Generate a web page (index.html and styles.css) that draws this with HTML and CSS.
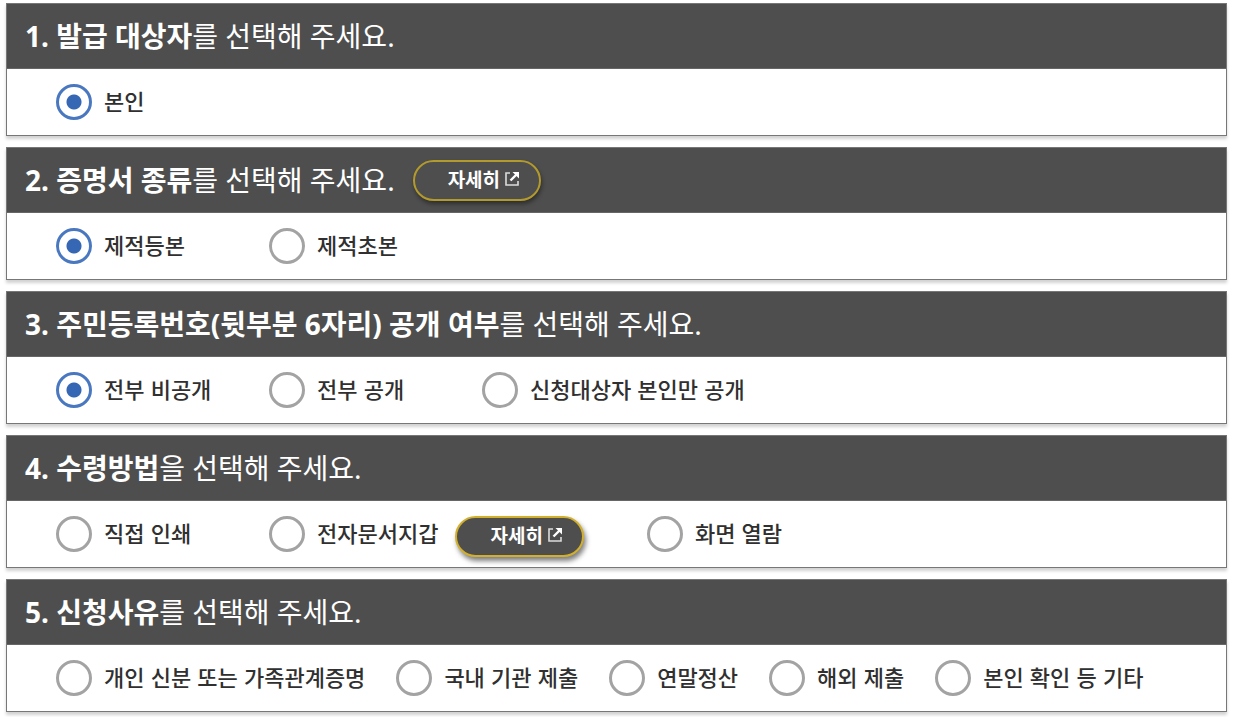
FILE: index.html
```html
<!DOCTYPE html>
<html lang="ko">
<head>
<meta charset="utf-8">
<title>제적부 증명서 신청</title>
<meta name="viewport" content="width=device-width, initial-scale=1">
<link rel="stylesheet" href="styles.css">
</head>
<body>
<svg class="sprite" aria-hidden="true">
  <symbol id="icon-external" viewBox="0 0 16 16">
    <path d="M6 2H2v12h12v-4" fill="none" stroke="currentColor" stroke-width="1.6" opacity=".8"/>
    <path d="M6.500 9.500 13 3" fill="none" stroke="currentColor" stroke-width="2.4"/>
    <path d="M8.500 1H15v6.500z" fill="currentColor"/>
  </symbol>
</svg>
<form class="form">
  <section class="card" role="radiogroup" aria-labelledby="q1">
    <header class="card-head"><h2 class="title" id="q1"><strong>1. 발급 대상자</strong>를 선택해 주세요.</h2></header>
    <div class="options">
      <label class="option"><input class="radio" type="radio" name="target" checked><span class="option-text">본인</span></label>
    </div>
  </section>

  <section class="card" role="radiogroup" aria-labelledby="q2">
    <header class="card-head">
      <h2 class="title" id="q2"><strong>2. 증명서 종류</strong>를 선택해 주세요.</h2>
      <button class="detail" type="button">자세히<svg class="icon" aria-hidden="true"><use href="#icon-external"/></svg></button>
    </header>
    <div class="options">
      <label class="option option-column"><input class="radio" type="radio" name="kind" checked><span class="option-text">제적등본</span></label>
      <label class="option option-column"><input class="radio" type="radio" name="kind"><span class="option-text">제적초본</span></label>
    </div>
  </section>

  <section class="card" role="radiogroup" aria-labelledby="q3">
    <header class="card-head"><h2 class="title" id="q3"><strong>3. 주민등록번호(뒷부분 6자리) 공개 여부</strong>를 선택해 주세요.</h2></header>
    <div class="options">
      <label class="option option-column"><input class="radio" type="radio" name="number" checked><span class="option-text">전부 비공개</span></label>
      <label class="option option-column"><input class="radio" type="radio" name="number"><span class="option-text">전부 공개</span></label>
      <label class="option"><input class="radio" type="radio" name="number"><span class="option-text">신청대상자 본인만 공개</span></label>
    </div>
  </section>

  <section class="card" role="radiogroup" aria-labelledby="q4">
    <header class="card-head"><h2 class="title" id="q4"><strong>4. 수령방법</strong>을 선택해 주세요.</h2></header>
    <div class="options">
      <label class="option option-column"><input class="radio" type="radio" name="receive"><span class="option-text">직접 인쇄</span></label>
      <div class="option-group">
        <label class="option"><input class="radio" type="radio" name="receive"><span class="option-text">전자문서지갑</span></label>
        <button class="detail detail-raised" type="button">자세히<svg class="icon" aria-hidden="true"><use href="#icon-external"/></svg></button>
      </div>
      <label class="option"><input class="radio" type="radio" name="receive"><span class="option-text">화면 열람</span></label>
    </div>
  </section>

  <section class="card" role="radiogroup" aria-labelledby="q5">
    <header class="card-head"><h2 class="title" id="q5"><strong>5. 신청사유</strong>를 선택해 주세요.</h2></header>
    <div class="options">
      <label class="option"><input class="radio" type="radio" name="reason"><span class="option-text">개인 신분 또는 가족관계증명</span></label>
      <label class="option"><input class="radio" type="radio" name="reason"><span class="option-text">국내 기관 제출</span></label>
      <label class="option"><input class="radio" type="radio" name="reason"><span class="option-text">연말정산</span></label>
      <label class="option"><input class="radio" type="radio" name="reason"><span class="option-text">해외 제출</span></label>
      <label class="option"><input class="radio" type="radio" name="reason"><span class="option-text">본인 확인 등 기타</span></label>
    </div>
  </section>
</form>
</body>
</html>
```
FILE: styles.css
```css
* {
  box-sizing: border-box;
}

body {
  margin: 0;
  background: #fff;
  color: #303030;
  font-family: "Noto Sans CJK KR", sans-serif;
}

.sprite {
  display: none;
}

.form {
  display: flex;
  flex-direction: column;
  gap: 11px;
  padding: 3px 6px 5px;
}

.card {
  border: 1px solid #777;
  background: #fff;
  box-shadow: 0 3px 3px rgba(0, 0, 0, 0.18);
}

.card-head {
  display: flex;
  align-items: center;
  gap: 18px;
  min-height: 65px;
  padding: 0 18px;
  border-bottom: 1px solid #666;
  background: #4e4e4e;
  color: #fff;
}

.title {
  margin: 0;
  font-family: "Noto Sans", "Noto Sans CJK KR", sans-serif;
  font-size: 28px;
  font-weight: 400;
  line-height: 40px;
}

.title strong {
  font-weight: 700;
}

.options {
  display: flex;
  flex-wrap: wrap;
  align-items: center;
  column-gap: 31px;
  min-height: 66px;
  padding: 0 49px;
}

.option {
  display: flex;
  align-items: center;
  gap: 12px;
  font-size: 22px;
  font-weight: 500;
  line-height: 32px;
}

.option-text {
  padding-bottom: 4px;
}

.option-column {
  min-width: 182px;
}

.option-group {
  display: flex;
  align-items: center;
  gap: 17px;
  padding-right: 32px;
}

.radio {
  appearance: none;
  flex: none;
  width: 36px;
  height: 36px;
  margin: 0;
  border: 3px solid #a3a3a3;
  border-radius: 50%;
  background: #fff;
}

.radio:checked {
  border-color: #4a78c0;
  background: radial-gradient(circle, #3567b5 7px, #fff 8px);
}

.detail {
  display: flex;
  align-items: center;
  gap: 4px;
  height: 41px;
  padding: 0 19px 2px 33px;
  border: 2px solid #b39a2c;
  border-radius: 21px;
  background: #4e4e4e;
  box-shadow: 1px 3px 4px rgba(0, 0, 0, 0.4);
  color: #fff;
  font-family: inherit;
  font-size: 19px;
  font-weight: 700;
  line-height: 28px;
}

.detail-raised {
  margin-top: 4px;
  border-color: #d3b02c;
  box-shadow: 2px 4px 5px rgba(0, 0, 0, 0.5);
}

.icon {
  width: 16px;
  height: 16px;
}
```
